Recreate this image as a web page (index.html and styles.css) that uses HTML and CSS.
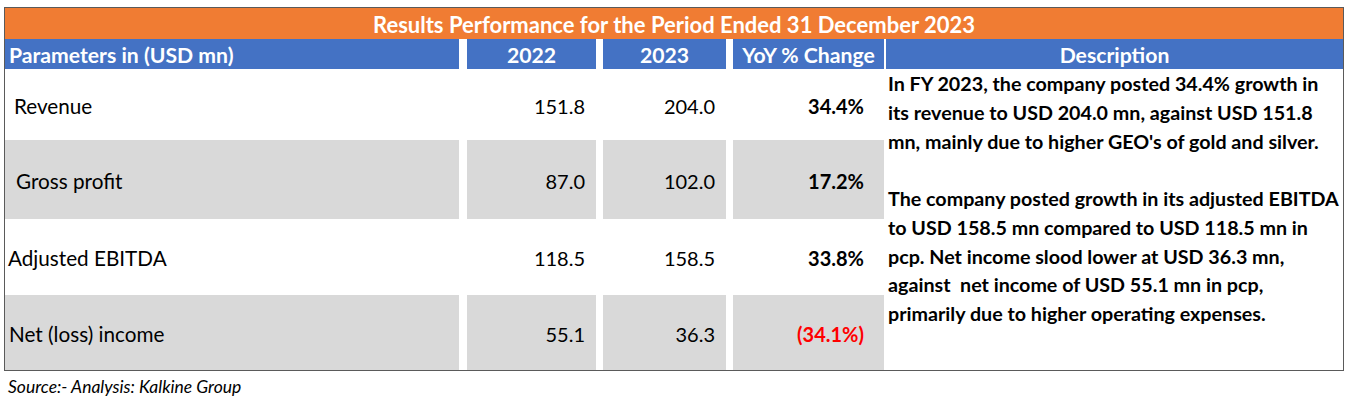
FILE: index.html
```html
<!DOCTYPE html>
<html>
<head>
<meta charset="utf-8">
<link rel="stylesheet" href="styles.css">
</head>
<body>
<div class="page">
  <div class="table">
    <div class="title">Results Performance for the Period Ended 31 December 2023</div>
    <div class="grid">
      <div class="cell head c1 left">Parameters in (USD mn)</div>
      <div class="cell head c2 center">2022</div>
      <div class="cell head c3 center">2023</div>
      <div class="cell head c4 center">YoY % Change</div>
      <div class="cell head c5 center">Description</div>

      <div class="cell c1 label pad-rev">Revenue</div>
      <div class="cell c2 num">151.8</div>
      <div class="cell c3 num">204.0</div>
      <div class="cell c4 num yoy">34.4%</div>

      <div class="desc">
        <p>In FY 2023, the company posted 34.4% growth in<br>its revenue to USD 204.0 mn, against USD 151.8<br>mn, mainly due to higher GEO's of gold and silver.</p>
        <p>The company posted growth in its adjusted EBITDA<br>to USD 158.5 mn compared to USD 118.5 mn in<br>pcp. Net income slood lower at USD 36.3 mn,<br>against&nbsp; net income of USD 55.1 mn in pcp,<br>primarily due to higher operating expenses.</p>
      </div>

      <div class="cell c1 label alt pad-gp">Gross profit</div>
      <div class="cell c2 num alt">87.0</div>
      <div class="cell c3 num alt">102.0</div>
      <div class="cell c4 num yoy alt">17.2%</div>

      <div class="cell c1 label pad-ae">Adjusted EBITDA</div>
      <div class="cell c2 num">118.5</div>
      <div class="cell c3 num">158.5</div>
      <div class="cell c4 num yoy">33.8%</div>

      <div class="cell c1 label alt pad-ni">Net (loss) income</div>
      <div class="cell c2 num alt">55.1</div>
      <div class="cell c3 num alt">36.3</div>
      <div class="cell c4 num yoy alt neg">(34.1%)</div>
    </div>
  </div>
  <div class="source">Source:- Analysis: Kalkine Group</div>
</div>
</body>
</html>
```

FILE: styles.css
```css
html, body {
  margin: 0;
  padding: 0;
  background: #ffffff;
}

body {
  font-family: "Lato", "Open Sans", sans-serif;
  color: #000000;
}

.page {
  padding: 7px 0 0 4px;
}

.table {
  width: 1340px;
  box-sizing: border-box;
  border: 1px solid #5a5a5a;
}

.title {
  height: 31px;
  background: #f07c33;
  color: #ffffff;
  font-weight: 700;
  font-size: 22px;
  display: flex;
  align-items: center;
  justify-content: center;
  padding-top: 1px;
  box-sizing: border-box;
}

.grid {
  display: grid;
  grid-template-columns: 462px 136px 130px 153px 1fr;
  grid-template-rows: 30px 71px 79px 76px 75px;
}

.cell {
  display: flex;
  align-items: center;
  font-size: 20px;
  box-sizing: border-box;
  padding-top: 2px;
}

.label { font-size: 20.7px; }

.c1 { margin-right: 8px; }
.c2 { margin-right: 7px; }
.c3 { margin-right: 7px; }
.c4 { margin-right: 2px; }

.head {
  background: #4472c4;
  color: #ffffff;
  font-weight: 700;
  font-size: 21.2px;
}

.left { padding-left: 4px; }
.center { justify-content: center; }

.num {
  justify-content: flex-end;
  padding-right: 11px;
}

.yoy {
  font-weight: 700;
  padding-right: 20px;
}

.neg { color: #ff0000; }

.alt { background: #d9d9d9; }

.pad-rev { padding-left: 9px; }
.pad-gp { padding-left: 11px; }
.pad-ae { padding-left: 3px; }
.pad-ni { padding-left: 4px; }

.desc {
  grid-column: 5;
  grid-row: 2 / 6;
  padding: 1px 0 0 2px;
  font-weight: 700;
  font-size: 19.7px;
  line-height: 28.75px;
  white-space: nowrap;
}

.desc p {
  margin: 0 0 28.75px 0;
}

.source {
  font-style: italic;
  font-size: 17.5px;
  padding: 5px 0 0 4px;
}
```
